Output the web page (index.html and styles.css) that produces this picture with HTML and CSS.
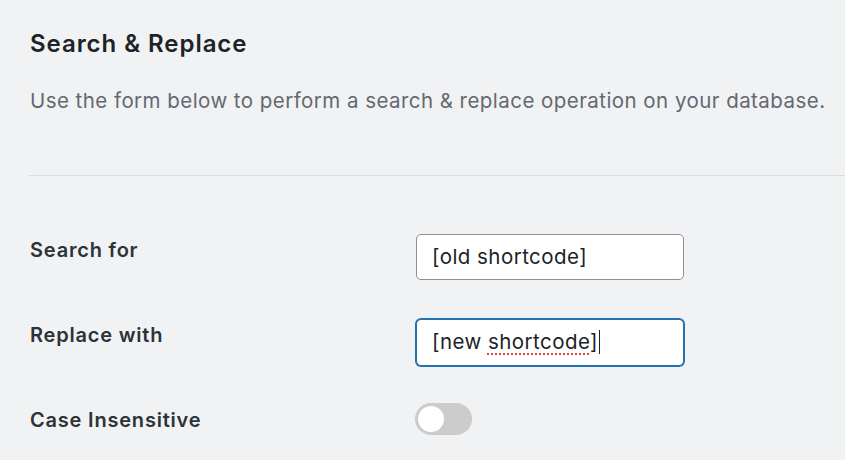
FILE: index.html
```html
<!DOCTYPE html>
<html>
<head>
    <title>Search &amp; Replace</title>
    <link rel="stylesheet" href="styles.css">
</head>
<body>
    <div class="wrap">
        <h1>Search &amp; Replace</h1>
        <p class="desc">Use the form below to perform a search &amp; replace operation on your database.</p>

        <hr class="divider">

        <div class="form-table">
            <div class="row">
                <label class="row-label">Search for</label>
                <div class="field">[old shortcode]</div>
            </div>

            <div class="row">
                <label class="row-label">Replace with</label>
                <div class="field focused">[new <span class="misspelled">shortcode</span>]<span class="caret"></span></div>
            </div>

            <div class="row">
                <label class="row-label">Case Insensitive</label>
                <div class="toggle"><span class="knob"></span></div>
            </div>
        </div>
    </div>
</body>
</html>
```

FILE: styles.css
```css
body {
    margin: 0;
    background: #f1f2f4;
    font-family: Inter, "Liberation Sans", sans-serif;
    color: #1d2327;
}

.wrap {
    padding: 28px 0 0 30px;
}

h1 {
    margin: 0;
    font-size: 24px;
    font-weight: 600;
    letter-spacing: 0.95px;
    line-height: 32px;
    color: #1d2327;
}

.desc {
    margin: 28px 0 0;
    font-size: 20.5px;
    letter-spacing: 0.45px;
    line-height: 26px;
    color: #646970;
}

.divider {
    margin: 61px 0 0 -1px;
    border: none;
    border-top: 1px solid #dcdcde;
    height: 0;
}

.form-table {
    margin-top: 58px;
}

.row {
    display: flex;
    align-items: flex-start;
    height: 85px;
}

.row:last-child {
    height: auto;
}

.row-label {
    width: 386px;
    padding-top: 3px;
    font-size: 20px;
    font-weight: 600;
    letter-spacing: 0.8px;
    line-height: 26px;
    color: #2c3338;
}

.field {
    box-sizing: border-box;
    width: 268px;
    height: 46px;
    padding: 0 15px;
    background: #fff;
    border: 1px solid #8c8f94;
    border-radius: 5px;
    font-size: 20.5px;
    letter-spacing: 0.45px;
    line-height: 44px;
    color: #1d2327;
}

.field.focused {
    height: 47px;
    border-color: #2271b1;
    box-shadow: 0 0 0 1px #2271b1;
}

.misspelled {
    text-decoration: underline dotted #e2453c;
    text-decoration-thickness: 2px;
    text-underline-offset: 4px;
}

.caret {
    display: inline-block;
    width: 1px;
    height: 24px;
    margin-left: 1px;
    vertical-align: -5px;
    background: #1d2327;
}

.toggle {
    position: relative;
    width: 57px;
    height: 32px;
    margin-top: -1px;
    margin-left: -1px;
    border-radius: 16px;
    background: #cccccc;
}

.knob {
    position: absolute;
    top: 3px;
    left: 3px;
    width: 26px;
    height: 26px;
    border-radius: 50%;
    background: #fff;
}
```
